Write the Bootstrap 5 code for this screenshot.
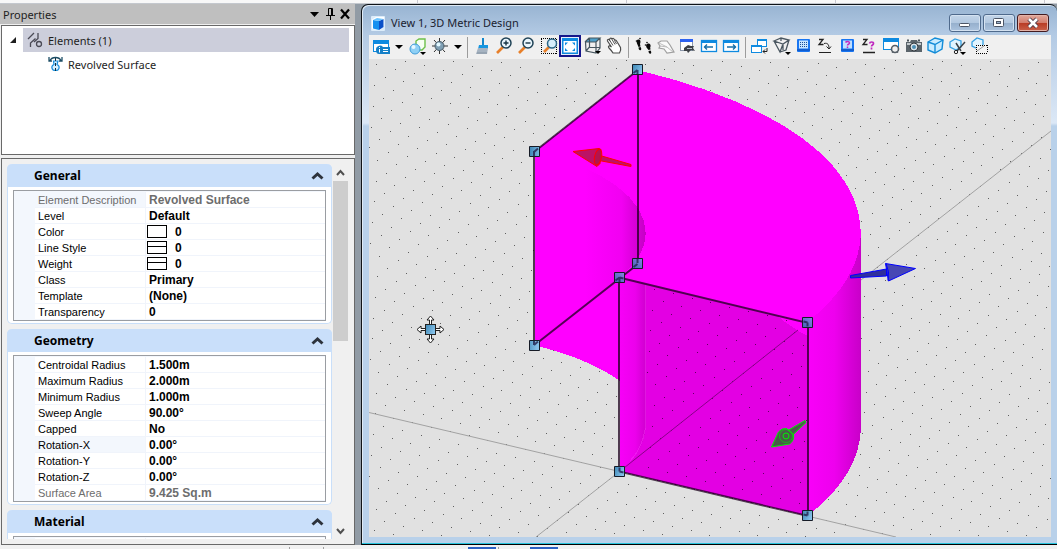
<!DOCTYPE html>
<html lang="en">
<head>
<meta charset="utf-8">
<meta name="viewport" content="width=device-width, initial-scale=1">
<title>View 1, 3D Metric Design</title>
<link href="https://cdn.jsdelivr.net/npm/bootstrap@5.3.0/dist/css/bootstrap.min.css" rel="stylesheet">
<style>
body{background:#919ba5;font-family:"Noto Sans","Open Sans",sans-serif;font-size:11px;line-height:16px;color:#1e1e1e}
button{border:0;background:none;padding:0;color:inherit}
svg{display:block}
.strip-top{height:4px;background:#f8f8f8;border-bottom:1px solid #c4c8ce}
.strip-top .tick{background:#c8c8d0}
.strip-bottom{height:4px;background:#f1f1f1}
.strip-bottom span{height:2px;margin-top:2px}
.tab-mark{width:28px;background:#2b62c4}
.tick{width:1px;background:#a0a0a0}
/* properties panel */
.props{width:355px;background:#f0f0f0}
.props-title{height:20px;background:#bfbfbf;padding:0 4px 0 3px}
.props-title h1{font-size:11px;line-height:19px;margin:0;font-weight:400}
.sunken{border:1px solid #696969;margin-left:1px}
.tree{height:130px;background:#fff;margin-top:1px;padding:2px 5px 0 6px}
.tree-row{height:24px}
.tree-row span{padding-top:2px}
.tree-sel{background:#cccedb;margin-left:1px;padding-left:4px}
.tree-child{padding-left:40px}
.groups{margin-top:3px;background:#f0f0f0;padding:5px 6px 5px 5px;min-height:0}
.group-list{gap:5px;min-height:0}
.prop-group{background:#fff;border:1px solid #c9dff9;border-top:0;border-radius:5px;padding-bottom:2px}
.group-head{height:23px;background:#c9dffa;border-radius:5px 5px 0 0;margin:0 -1px 3px;padding:0 8px 0 27px}
.group-head h2{font:700 12px/23px "Noto Sans",sans-serif;margin:0;color:#000}
.grid-box{border:1px solid #9a9da2;margin:0 5px;background:#f3f7fd;padding:1px 0 0 21px}
.grid-tab{width:100%;border-collapse:separate;border-spacing:0;font-family:"Liberation Sans",sans-serif;font-size:12px;color:#000;background:#fff;table-layout:fixed}
.grid-tab th,.grid-tab td{height:16px;padding:1px 0 0 4px;border-bottom:1px solid #f0f4fb;white-space:nowrap;line-height:14px}
.grid-tab th{width:111px;font-size:11px;font-weight:400;padding-left:3px;border-right:1px solid #f0f4fb}
.grid-tab td{font-weight:700;padding-left:3px}
.grid-tab .ro{color:#6d6d6d}
.grid-tab .hot{background:#f3f7fd}
.swatch{display:inline-block;width:20px;height:13px;border:1px solid #000;vertical-align:top;margin:0 8px 0 -2px;background:#fff}
.swatch.ruled{background:linear-gradient(#000,#000) 0 4px/100% 1px no-repeat #fff}
.scroller{width:15px;margin-left:1px}
.scroller button{height:17px;width:15px}
.thumb{height:160px;background:#cdcdcd}
/* view window */
.view-win{margin:0 0 0 6px;border:1px solid #101418;border-bottom-color:#000;border-right:0;border-radius:7px 7px 0 0;background:linear-gradient(#98b4d2,#b3cae4 30px,#dce8f6 118px,#b9d1ea 121px,#b9d1ea);box-shadow:inset 0 -1px #27c3dc,inset 1px 1px #dfeaf5}
.view-title{height:30px;padding:6px 8px 0 9px}
.view-title h2{font-size:11px;line-height:16px;margin:0 0 0 6px;font-weight:400;color:#1a2230}
.wbtn{width:32px;height:18px;border:1px solid #4f6a8c;border-radius:3px;background:linear-gradient(#c3d5e9,#b2c8e0 48%,#96b0cd 52%,#abc3de);box-shadow:inset 0 0 0 1px #d4e2f1}
.wbtn-close{border-color:#431b20;background:linear-gradient(#e2a99c,#d37d6d 48%,#b93c25 52%,#c9614a);box-shadow:inset 0 0 0 1px #e4b3a8}
.view-body{margin:0 6px 7px 7px;min-height:0}
.bar{height:24px;background:#f0f0f0;padding:0 0 2px 1px}
.bar button{width:22px;height:24px;flex:none}
.bar .drop{width:14px}
.bar .on{border:2px solid #16168a;background:#e6eefc;height:22px}
.vr-line{width:1px;height:21px;background:#9c9c9c;margin:2px 3px 0;flex:none}
.scene{background:#e1e1e1;min-height:0}
</style>
</head>
<body class="vh-100 d-flex flex-column overflow-hidden">
<div class="strip-top d-flex justify-content-between flex-shrink-0" style="padding:0 12px 0 417px"><span class="tick"></span><span class="tick"></span><span class="tick"></span><span class="tick"></span></div>
<div class="d-flex flex-grow-1" style="min-height:0">

<aside class="props d-flex flex-column flex-shrink-0">
  <header class="props-title d-flex align-items-center flex-shrink-0">
    <h1 class="me-auto">Properties</h1>
    <button aria-label="Menu"><svg width="14" height="16"><path d="M0 6h9l-4.500 5z" fill="#000"/></svg></button>
    <button aria-label="Pin"><svg width="16" height="16" fill="none" stroke="#000"><path d="M4.500 9.500v-7h4v7M7.500 3v6M2 9.500h9M6.500 10v4"/></svg></button>
    <button aria-label="Close"><svg width="11" height="16"><path d="M1 3.500l8 9M9 3.500l-8 9" stroke="#000" stroke-width="2.200"/></svg></button>
  </header>

  <div class="tree sunken flex-shrink-0">
    <div class="tree-row d-flex align-items-center">
      <button aria-label="Collapse"><svg width="14" height="10"><path d="M8 2v6H2z" fill="#1e1e1e"/></svg></button>
      <div class="tree-sel tree-row d-flex align-items-center flex-grow-1 gap-1">
        <svg width="17" height="16" fill="none" stroke="#4a4a55" stroke-width="1.300"><path d="M1 7l6-6M3.500 15V11l5-4.500M11 1v5.500L7 10"/><circle cx="12" cy="12" r="2.500"/></svg>
        <span>Elements (1)</span>
      </div>
    </div>
    <div class="tree-row tree-child d-flex align-items-center gap-1">
      <svg width="16" height="17" fill="none"><path d="M2 4.500C4 .5 11 .5 13 4.500M1 1v4h3M14 1v4h-3" stroke="#1d4e66" stroke-width="1.300"/><path d="M5.500 5h4.500L9 8.500C12.500 10 11.500 14.500 7.500 14.500s-5-4.500-1.500-6z" fill="#d8f0ff" stroke="#1a8fdc" stroke-width="1.200"/><path d="M7.500 2v15" stroke="#12303f" stroke-dasharray="3 2"/></svg>
      <span>Revolved Surface</span>
    </div>
  </div>

  <div class="groups sunken d-flex flex-grow-1">
    <div class="group-list d-flex flex-column flex-grow-1 overflow-hidden">
      <section class="prop-group flex-shrink-0">
        <div class="group-head d-flex align-items-center"><h2 class="me-auto">General</h2><button aria-label="Collapse General"><svg width="13" height="10"><path d="M1.500 7.500L6.500 3l5 4.500" fill="none" stroke="#2d333c" stroke-width="3"/></svg></button></div>
        <div class="grid-box"><table class="grid-tab">
          <tr><th class="ro hot" scope="row">Element Description</th><td class="ro">Revolved Surface</td></tr>
          <tr><th scope="row">Level</th><td>Default</td></tr>
          <tr><th scope="row">Color</th><td><span class="swatch"></span>0</td></tr>
          <tr><th scope="row">Line Style</th><td><span class="swatch ruled"></span>0</td></tr>
          <tr><th scope="row">Weight</th><td><span class="swatch ruled"></span>0</td></tr>
          <tr><th scope="row">Class</th><td>Primary</td></tr>
          <tr><th scope="row">Template</th><td>(None)</td></tr>
          <tr><th scope="row">Transparency</th><td>0</td></tr>
        </table></div>
      </section>
      <section class="prop-group flex-shrink-0">
        <div class="group-head d-flex align-items-center"><h2 class="me-auto">Geometry</h2><button aria-label="Collapse Geometry"><svg width="13" height="10"><path d="M1.500 7.500L6.500 3l5 4.500" fill="none" stroke="#2d333c" stroke-width="3"/></svg></button></div>
        <div class="grid-box"><table class="grid-tab">
          <tr><th scope="row">Centroidal Radius</th><td>1.500m</td></tr>
          <tr><th scope="row">Maximum Radius</th><td>2.000m</td></tr>
          <tr><th scope="row">Minimum Radius</th><td>1.000m</td></tr>
          <tr><th scope="row">Sweep Angle</th><td>90.00°</td></tr>
          <tr><th scope="row">Capped</th><td>No</td></tr>
          <tr><th class="hot" scope="row">Rotation-X</th><td>0.00°</td></tr>
          <tr><th scope="row">Rotation-Y</th><td>0.00°</td></tr>
          <tr><th scope="row">Rotation-Z</th><td>0.00°</td></tr>
          <tr><th class="ro" scope="row">Surface Area</th><td class="ro">9.425 Sq.m</td></tr>
        </table></div>
      </section>
      <section class="prop-group flex-shrink-0">
        <div class="group-head d-flex align-items-center"><h2 class="me-auto">Material</h2><button aria-label="Collapse Material"><svg width="13" height="10"><path d="M1.500 7.500L6.500 3l5 4.500" fill="none" stroke="#2d333c" stroke-width="3"/></svg></button></div>
        <div class="grid-box"><table class="grid-tab"><tr><th scope="row"></th><td></td></tr></table></div>
      </section>
    </div>
    <div class="scroller d-flex flex-column flex-shrink-0">
      <button aria-label="Scroll up"><svg width="15" height="17"><path d="M4 11l3.500-4L11 11" fill="none" stroke="#505050" stroke-width="2"/></svg></button>
      <div class="thumb"></div>
      <button class="mt-auto" aria-label="Scroll down"><svg width="15" height="17"><path d="M4 7l3.500 4L11 7" fill="none" stroke="#505050" stroke-width="2"/></svg></button>
    </div>
  </div>
</aside>

<main class="view-win d-flex flex-column flex-grow-1" style="min-width:0">
  <header class="view-title d-flex align-items-center flex-shrink-0">
    <svg width="14" height="15"><rect width="14" height="15" rx="1" fill="#dcecfa"/><path d="M1 3.500L5 1h8v9l-4 4-8-1z" fill="#fff"/><path d="M2 4l6 1v9l-6-1.500z" fill="#1690f0"/><path d="M8 5l4.500-2v8L8 14z" fill="#0a50c8"/><path d="M2 4l4-2 6.500 1L8 5z" fill="#6cc4ff"/></svg>
    <h2 class="me-auto">View 1, 3D Metric Design</h2>
    <div class="d-flex" style="gap:2px">
      <button class="wbtn" aria-label="Minimize"><svg width="30" height="16"><rect x="9.500" y="8.500" width="10" height="3" rx="1" fill="#fff" stroke="#4b5566"/></svg></button>
      <button class="wbtn" aria-label="Maximize"><svg width="30" height="16" fill="#fff" stroke="#4b5566"><rect x="9.500" y="3.500" width="10" height="8" rx="1"/><rect x="12.500" y="6.500" width="4" height="2" fill="#9db4ce"/></svg></button>
      <button class="wbtn wbtn-close" aria-label="Close"><svg width="30" height="16" fill="none"><path d="M11 4l8 8M19 4l-8 8" stroke="#4b3a48" stroke-width="4.500"/><path d="M11 4l8 8M19 4l-8 8" stroke="#fff" stroke-width="2.600"/></svg></button>
    </div>
  </header>
  <div class="view-body d-flex flex-column flex-grow-1">
    <nav class="bar d-flex align-items-center flex-shrink-0 overflow-hidden" aria-label="View tools">
      <button aria-label="View attributes"><svg width="22" height="24" fill="none"><rect x="3.500" y="6.500" width="15" height="11" fill="#fff" stroke="#0e8ae0"/><path d="M3 6h16v4H3z" fill="#0e8ae0"/><path d="M6 16a4 4 0 0 1 7-3h7v7H9q-3 0-3-4z" fill="#1580c8"/><path d="M9.500 15v3.500M9.500 13v1M13 15.500h5M13 17.500h5" stroke="#fff"/></svg></button>
      <button class="drop" aria-label="More view attributes"><svg width="14" height="24"><path d="M3 11h8l-4 4z" fill="#000"/></svg></button>
      <button aria-label="Display style"><svg width="22" height="24"><path d="M10 7l3-2h6v8l-3 3h-6z" fill="#f6fff2" stroke="#6cc04a" stroke-width="1.400"/><circle cx="9" cy="15" r="5" fill="#8fd0f5" stroke="#3f9bd8"/><circle cx="7.500" cy="13" r="2" fill="#e9f8ff"/><path d="M14 18h6l-3 3z" fill="#000"/></svg></button>
      <button aria-label="Brightness"><svg width="22" height="24"><path d="M11.500 4v16M4 12h16M6 6l11 12M17 6L6 18" stroke="#333"/><circle cx="11.500" cy="12" r="4.500" fill="#7f9fb4" stroke="#4a5c68"/><circle cx="10.500" cy="10.500" r="2" fill="#e2f8ff"/></svg></button>
      <button class="drop" aria-label="More brightness"><svg width="14" height="24"><path d="M4 11h8l-4 4z" fill="#000"/></svg></button>
      <span class="vr-line"></span>
      <button aria-label="Update view"><svg width="22" height="24"><path d="M11 4h2v8h-2z" fill="#1387cc"/><path d="M8 11h9v4H7z" fill="#1696e0"/><path d="M7 14h10l-1 6H5z" fill="#a6b3c1"/><path d="M6 19h10" stroke="#8795a3"/></svg></button>
      <button aria-label="Zoom in"><svg width="22" height="24" fill="none"><path d="M4 19l6-6" stroke="#e8802a" stroke-width="2.600"/><circle cx="13" cy="9" r="5" fill="#eaf6fd" stroke="#1f4256" stroke-width="1.500"/><path d="M10.500 9h5M13 6.500v5" stroke="#173444" stroke-width="1.400"/></svg></button>
      <button aria-label="Zoom out"><svg width="22" height="24" fill="none"><path d="M4 19l6-6" stroke="#e8802a" stroke-width="2.600"/><circle cx="13" cy="9" r="5" fill="#eaf6fd" stroke="#1f4256" stroke-width="1.500"/><path d="M10.500 9h5" stroke="#173444" stroke-width="1.400"/></svg></button>
      <button aria-label="Window area"><svg width="22" height="24" fill="none"><path d="M4 4.500h16M4 19.500h16M4.500 5v15M19.500 5v15" stroke="#000" stroke-dasharray="1 1"/><path d="M7 18l5-5" stroke="#e8802a" stroke-width="2.600"/><circle cx="15" cy="9.500" r="4.500" fill="#d5edfb" stroke="#2b6788" stroke-width="1.500"/></svg></button>
      <button class="on" aria-label="Fit view" aria-pressed="true"><svg width="18" height="18"><path d="M1 1h16v16H1z" fill="#0e8ae0"/><path d="M2.500 4h13v11.500h-13z" fill="#fff"/><path d="M4 5.500h3l-3 3zM14 5.500v3l-3-3zM4 14v-3l3 3zM14 14h-3l3-3z" fill="#0e8ae0"/></svg></button>
      <button aria-label="Rotate view"><svg width="22" height="24"><path d="M4 8l4-4h11l-4 4z" fill="#4d9fc9"/><path d="M4.500 8h10.500v11L5 17zM4 8l4-4h11l-4 4M19 4v10l-4 5M8.500 4v9L5 17M8.500 13.500H19" fill="none" stroke="#46565f" stroke-width="1.200"/><path d="M14 17h6l-3 3z" fill="#000"/></svg></button>
      <button aria-label="Pan view"><svg width="22" height="24"><path d="M10 19c-1-2-2-3-4-5-1.500-2 .5-3 2.500-1L4.500 7c-.5-1.500 1-2 2-1 0-2 1.500-2.500 2.500-1 1-1 2-.5 2.500 1 1.500-.5 2 .5 3 2.500l3 5c.6 2 0 4-1 5.500z" fill="#fff" stroke="#4c4c4c" stroke-width="1.200"/><path d="M6.500 6l3.500 5.500M9 5.500l3 5M11.500 6.500l2 3.500" stroke="#555"/></svg></button>
      <span class="vr-line"></span>
      <button aria-label="Walk"><svg width="22" height="24" fill="#0a0a0a"><path d="M6 5.500c2.500-.5 3 2 2 4.500l.5 2.500-2 .5L5 9.500c-.8-2-.3-3.600 1-4z"/><path d="M6.500 13.500l2-.5c1 1.500 1 3 0 3.200-1.200.2-2-1-2-2.700z"/><path d="M16 9.500c2.500 0 3.200 2.200 2.200 4l.3 2-2 .5-2-2.500c-1-2-.2-3.800 1.500-4z"/><path d="M16.500 17l2-.5c1 1.500 1 3 0 3.200-1.200.2-2-1-2-2.700z"/><circle cx="4.500" cy="7" r=".8"/><circle cx="8" cy="4.500" r=".8"/><circle cx="13.500" cy="11" r=".8"/><circle cx="15" cy="8.500" r=".8"/></svg></button>
      <button aria-label="Fly"><svg width="22" height="24"><path d="M4 9l3-2h6l3 4 4 7-7 1-3-4-5-1 1-2z" fill="#fafafa" stroke="#a0a0a0" stroke-width="1.200"/><path d="M5 9l8 4 6 5M6 12l7 1" fill="none" stroke="#bdbdbd"/></svg></button>
      <button aria-label="Navigate view"><svg width="22" height="24"><rect x="4.500" y="5.500" width="12" height="11" fill="#fff" stroke="#8b96a8"/><path d="M4 5h13v3H4z" fill="#2d62f0"/><path d="M8 14l4-3 3 1h3l-1 2 2 3-4-1-3 3-1-2H8z" fill="#3d4046"/><path d="M11 14.500h5" stroke="#b8c0c8"/></svg></button>
      <button aria-label="View previous"><svg width="22" height="24"><rect x="3.500" y="6.500" width="15" height="11" fill="#fff" stroke="#0e8ae0" stroke-width="1.300"/><path d="M3 6h16v3H3z" fill="#0e8ae0"/><path d="M6 13h9M9 10.500L6.500 13 9 15.500" fill="none" stroke="#166fa8" stroke-width="1.400"/></svg></button>
      <button aria-label="View next"><svg width="22" height="24"><rect x="3.500" y="6.500" width="15" height="11" fill="#fff" stroke="#0e8ae0" stroke-width="1.300"/><path d="M3 6h16v3H3z" fill="#0e8ae0"/><path d="M7 13h9M13 10.500l2.500 2.500-2.500 2.500" fill="none" stroke="#166fa8" stroke-width="1.400"/></svg></button>
      <span class="vr-line"></span>
      <button aria-label="Copy view"><svg width="22" height="24"><rect x="8.500" y="5.500" width="9" height="7" fill="#fff" stroke="#0e8ae0"/><path d="M8 5h10v2H8z" fill="#0e8ae0"/><rect x="2.500" y="11.500" width="10" height="7" fill="#fff" stroke="#0e8ae0"/><path d="M2 11h11v2H2z" fill="#0e8ae0"/><path d="M18 14v3.500h-4M16 15.500l-2 2 2 2" fill="none" stroke="#222"/></svg></button>
      <button aria-label="View perspective"><svg width="22" height="24" fill="none" stroke="#4a5660" stroke-width="1.300"><path d="M3 7l7-3 8 2-6 4zM3 7l6 11 3-8M18 6l-3 10-6 2M12 10v6M10 4v3"/><path d="M14 18h6l-3 3z" fill="#000" stroke="none"/></svg></button>
      <button aria-label="Set display depth"><svg width="22" height="24"><rect x="4" y="5" width="13" height="13" rx="1" fill="#1976f2"/><rect x="6" y="6.500" width="9" height="8" fill="#c8e6ff"/><path d="M7 8.500h7M7 10.500h7M7 12.500h7" stroke="#1b4f9c" stroke-dasharray="1 1"/><path d="M4 16h13" stroke="#0a47ad"/></svg></button>
      <button aria-label="Set active depth"><svg width="22" height="24" fill="none" stroke="#222"><path d="M4 5.500h4L4 10.500h4.500" stroke-width="1.300"/><path d="M9 9.500c4-1 5 1.500 5 5M11.500 12.500l2.500 2.500 2-2.500M4 18.500h12"/></svg></button>
      <button aria-label="Show display depth"><svg width="22" height="24"><rect x="4" y="5" width="13" height="13" rx="1" fill="#1976f2"/><rect x="6" y="6.500" width="9" height="8" fill="#bfe0ff"/><path d="M8.500 8.500c1-1.500 4-1.500 4 .5 0 1.500-2 1-2 2.500M10.500 12.500v1.500" fill="none" stroke="#c02ac0" stroke-width="1.500"/><path d="M4 16h13" stroke="#0a47ad"/></svg></button>
      <button aria-label="Show active depth"><svg width="22" height="24" fill="none"><path d="M4 5.500h4L4 10.500h4.500M4 18.500h12" stroke="#222" stroke-width="1.300"/><path d="M10.500 9.500c.5-2 4-2 4 0 0 1.500-2 1.500-2 3M12.500 13.500v2" stroke="#c02ac0" stroke-width="1.700"/></svg></button>
      <button aria-label="View settings"><svg width="22" height="24"><rect x="2.500" y="4.500" width="15" height="11" fill="#fff" stroke="#0e8ae0"/><path d="M2 4h16v4H2z" fill="#0e8ae0"/><circle cx="14" cy="15" r="3.500" fill="#f0f0f0" stroke="#555e66" stroke-width="1.600"/><path d="M11 19l1-1.500M17 19l-1-1.500" stroke="#555e66"/></svg></button>
      <button aria-label="Camera"><svg width="22" height="24"><path d="M3 8h4l1-2h6l1 2h4v10H3z" fill="#5b646b"/><path d="M4 9h14v2H4z" fill="#c3c9cd"/><circle cx="11" cy="13" r="4" fill="#d9e2e8" stroke="#33393e"/><circle cx="11" cy="13" r="2" fill="#4d8fb5"/><path d="M4 6.500h2M15 6.500h2" stroke="#4b545b" stroke-width="2"/></svg></button>
      <button aria-label="Clip volume"><svg width="22" height="24"><path d="M3 8l7-4 8 2-1 9-7 4-7-3z" fill="#c9ecff" stroke="#128cd8" stroke-width="1.400"/><path d="M3 8l7 2.500L18 6M10 10.500V19" fill="none" stroke="#128cd8" stroke-width="1.400"/></svg></button>
      <button aria-label="Clip by element"><svg width="22" height="24"><path d="M3 8l5-3 6 2v6l-5 3-6-3z" fill="#e0f4ff" stroke="#35a1e4" stroke-width="1.300"/><path d="M9 9l5 8M18 8l-8 9" stroke="#3b4248" stroke-width="1.500"/><circle cx="9" cy="18" r="1.700" fill="none" stroke="#222"/><path d="M13 18h6l-3 3z" fill="#000"/></svg></button>
      <button aria-label="Clip mask"><svg width="22" height="24"><path d="M3 8l5-4 6 2v6l-5 3-6-3z" fill="#e0f4ff" stroke="#35a1e4" stroke-width="1.300"/><path d="M7 11h12v8H7z" fill="#f3f3f3"/><path d="M7 11.500h12M7 19.500h12M7.500 11v8M18.500 11v8" stroke="#000" stroke-dasharray="1 1"/><path d="M8 17l7-5" stroke="#999"/></svg></button>
    </nav>
    <div class="scene flex-grow-1 overflow-hidden">
    <svg width="100%" height="100%" viewBox="369 59 682 478" preserveAspectRatio="xMidYMid slice" role="img" aria-label="Revolved surface in isometric view">
      <defs>
        <linearGradient id="bore" gradientUnits="userSpaceOnUse" x1="585" y1="0" x2="646" y2="0"><stop offset="0" stop-color="#f0f"/><stop offset=".6" stop-color="#f200f2"/><stop offset="1" stop-color="#c400c4"/></linearGradient>
        <linearGradient id="boreFront" gradientUnits="userSpaceOnUse" x1="619" y1="0" x2="646" y2="0"><stop offset="0" stop-color="#f800f8"/><stop offset=".6" stop-color="#ec00ec"/><stop offset="1" stop-color="#cf00cf"/></linearGradient>
        <linearGradient id="wall" gradientUnits="userSpaceOnUse" x1="808" y1="0" x2="861" y2="0"><stop offset="0" stop-color="#f900f9"/><stop offset=".5" stop-color="#ee00ee"/><stop offset="1" stop-color="#c800c8"/></linearGradient>
        <linearGradient id="grip" x1="0" y1="0" x2="1" y2="0.500"><stop offset="0" stop-color="#3c86b4"/><stop offset="1" stop-color="#86c2ea"/></linearGradient>
        <linearGradient id="gripOn" x1="0" y1="1" x2="1" y2="0"><stop offset="0" stop-color="#3f66b4"/><stop offset="1" stop-color="#8c7fe6"/></linearGradient>
        <clipPath id="open"><path d="M646 284L807 323V516L646 478z"/></clipPath>
      </defs>
      <path class="dots" fill="#606060" shape-rendering="crispEdges"/>
      <path d="M369 412.500L619.500 471.500M619.500 471.500L536 537M861 280L1051 131M807 516L896 537" stroke="#a2a2a2" fill="none"/>
      <g shape-rendering="crispEdges">
        <path d="M637.500 70C845 119 921 232 807.500 322L807.500 322L619.500 277.500V471.500H619.500V380.500Q585 357 534.500 345.500V151.500z" fill="#f0f"/>
        <path d="M637.500 70C768 101 860 158 861 233V427C860 460 843 488 807.500 516L619.500 471.500V380L640 260z" fill="#f0f"/>
        <path d="M807.500 322C843 294 860 264 861 233V427C860 460 843 488 807.500 516z" fill="url(#wall)"/>
        <path d="M534.500 151.500C638 176 676 232 619.500 277.500L534.500 345.500z" fill="url(#bore)"/>
        <path d="M619.500 277.500L807.500 322.500V516L619.500 471.500z" fill="#e300e3"/>
        <path d="M776 315L807.500 322.500V336Q792 328 776 315z" fill="#f0f"/>
        <path d="M619.500 277.500L645.500 284V428Q643 455 619.500 471.500z" fill="url(#boreFront)"/>
        <path d="M645.500 284V428Q642 449 630 461" fill="none" stroke="#f83af8" stroke-opacity=".4"/>
      </g>
      <path class="dots" fill="#600060" clip-path="url(#open)" shape-rendering="crispEdges"/>
      <path d="M619.500 471.500L798 330" stroke="#8a008a"/>
      <g fill="none" stroke="#1c001c" stroke-opacity=".75" stroke-width="2">
        <path d="M638 70V264L534 345.500V152z"/>
        <path d="M619 277.500L808 323V516L619 471.500z"/>
      </g>
      <!-- rotation and offset arrows -->
      <g fill="#b0154a" fill-opacity=".85" stroke="#f00">
        <path d="M600 155.500l31 9v2l-32-6z"/><path d="M573 151.500l26-3 2 1-1 14-3 3z"/><ellipse cx="598" cy="157" rx="3.500" ry="8" transform="rotate(12 598 157)"/>
      </g>
      <g fill="#4747b4" stroke="#00f">
        <path d="M850.500 275.500l36-6.500v7l-36 2z" fill="#30309c"/><path d="M885.500 263.500l30 5-27 12.500z"/><path d="M886 263.500q4 8 2 17" fill="none"/>
      </g>
      <g fill="#4a5a4a" stroke="#00f000">
        <path d="M787 431l18-10.500 1 2-15 14z"/><path d="M771.500 447l7-15q3-4 8-3.500l7 6q1 6-4 9.500z"/><circle cx="786" cy="436" r="3" fill="none"/><circle cx="786" cy="436" r="6.500" fill="none" stroke-opacity=".6"/>
      </g>
      <!-- edge handles -->
      <g stroke="#161b26" fill="url(#grip)">
        <path d="M529.500 146.500h10v10h-10zM529.500 340.500h10v10h-10z"/><path d="M632.500 64.500h10v10h-10z"/><path d="M614.500 466.500h10v10h-10z"/><path d="M802.500 510.500h10v10h-10z"/>
      </g>
      <g stroke="#161b26" fill="url(#gripOn)">
        <path d="M632.500 258.500h10v10h-10z"/><path d="M614.500 272.500h10v10h-10z"/><path d="M802.500 317.500h10v10h-10z"/>
      </g>
      <path d="M534 152l4-3.500M534 151v5M534 345l4-3.500M534 345v-4M637.500 70v4M637.500 70l-4 3M637.500 263v-4M637.500 264l-4 3M619.500 277.500l4 1M619.500 277v5M619.500 277.500l-4 3M619.500 471.500v-4M619.500 471.500l4 1M807.500 322.500v4M807.500 322.500l-4-1M807.500 515.500v-4M807.500 515.500l-4-1" stroke="#20204c" stroke-width="2" stroke-opacity=".8"/>
      <!-- move pointer -->
      <g stroke="#222" fill="#fff">
        <path d="M430.500 316l3.500 4h-2.500v5h-2v-5H427zM430.500 343l3.500-4h-2.500v-5h-2v5H427zM417 329.500l4-3.500v2.500h5v2h-5v2.500zM444 329.500l-4-3.500v2.500h-5v2h5v2.500z"/>
        <rect x="425.500" y="324.500" width="10" height="10" fill="url(#grip)"/>
      </g>
    </svg>
    </div>
  </div>
</main>
</div>
<div class="strip-bottom d-flex flex-shrink-0">
  <span class="tick" style="margin-left:289px"></span><span class="tick" style="margin-left:33px"></span>
  <span class="tab-mark" style="margin-left:144px"></span><span class="tick" style="margin-left:2px"></span><span class="tab-mark" style="margin-left:31px"></span>
</div>
<script src="https://cdn.jsdelivr.net/npm/bootstrap@5.3.0/dist/js/bootstrap.bundle.min.js"></script>
<script>
// ground grid: ten points per metre along both plan axes
const O = [619.5, 471.5], U = [18.8, 4.44], V = [10.3, -8.15];
let d = '';
for (let i = -40; i <= 40; i++) for (let j = -70; j <= 70; j++) {
  const x = Math.floor(O[0] + i * U[0] + j * V[0]), y = Math.floor(O[1] + i * U[1] + j * V[1]);
  if (x >= 369 && x < 1051 && y >= 59 && y < 537) d += `M${x} ${y}h1v1h-1z`;
}
document.querySelectorAll('.dots').forEach(p => p.setAttribute('d', d));
</script>
</body>
</html>
